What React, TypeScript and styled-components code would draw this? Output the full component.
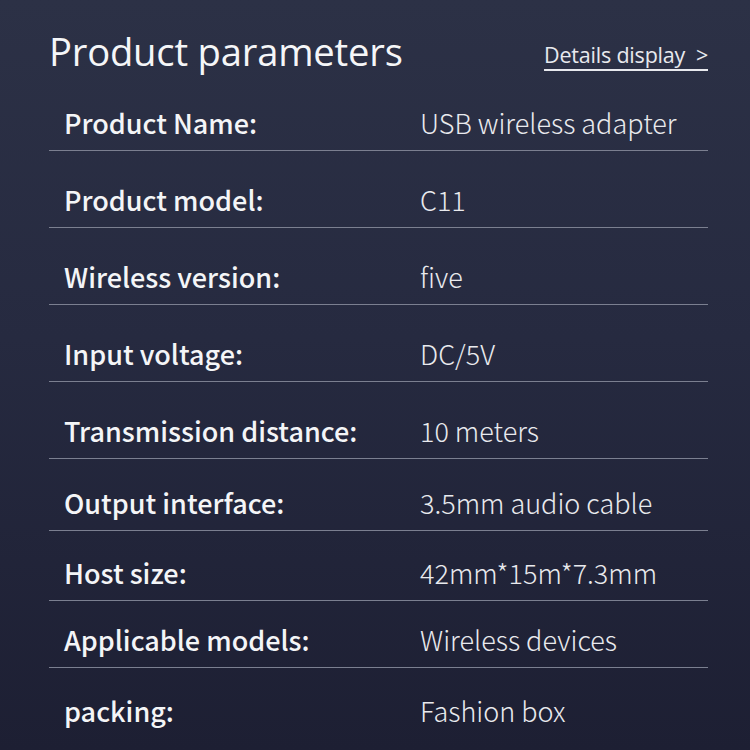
import React from "react";
import styled, { createGlobalStyle } from "styled-components";

const GlobalStyle = createGlobalStyle`
  html, body {
    margin: 0;
    padding: 0;
  }
  body {
    background: #1e2034;
  }
`;

const Page = styled.div`
  width: 750px;
  height: 750px;
  box-sizing: border-box;
  padding: 25px 42px 0 49px;
  background: linear-gradient(180deg, #2c3146 0%, #262a40 45%, #1d1f33 100%);
  font-family: "Noto Sans CJK SC", "Noto Sans", sans-serif;
  color: #f3f4f6;
  overflow: hidden;
`;

const Header = styled.div`
  display: flex;
  align-items: center;
  justify-content: space-between;
  height: 52px;
`;

const Title = styled.h1`
  margin: 0;
  font-family: "Open Sans", "Noto Sans", sans-serif;
  font-size: 38.2px;
  font-weight: 500;
  letter-spacing: -0.2px;
  color: #f5f6f8;
`;

const DetailsLink = styled.a`
  font-family: "Open Sans", "Noto Sans", sans-serif;
  font-size: 21.5px;
  letter-spacing: -0.2px;
  color: #e8e9ee;
  text-decoration: underline;
  text-decoration-skip-ink: none;
  text-underline-offset: 6px;
  text-decoration-thickness: 1.5px;
  white-space: pre;
  margin-top: 6px;
`;

const Table = styled.div`
  display: flex;
  flex-direction: column;
`;

const Row = styled.div<{ $h: number; $last?: boolean }>`
  display: flex;
  align-items: flex-end;
  height: ${(p) => p.$h}px;
  box-sizing: border-box;
  padding-bottom: ${(p) => (p.$last ? 14 : 12)}px;
  border-bottom: ${(p) => (p.$last ? "none" : "1.5px solid #7b7f90")};
`;

const Label = styled.div`
  width: 356px;
  padding-left: 15px;
  font-size: 27px;
  line-height: 30px;
  font-weight: 500;
  color: #f4f5f7;
`;

const Value = styled.div`
  font-size: 27px;
  line-height: 30px;
  font-weight: 300;
  color: #e9eaee;
`;

const rows: [string, string, number][] = [
  ["Product Name:", "USB wireless adapter", 74],
  ["Product model:", "C11", 77],
  ["Wireless version:", "five", 77],
  ["Input voltage:", "DC/5V", 77],
  ["Transmission distance:", "10 meters", 77],
  ["Output interface:", "3.5mm audio cable", 72],
  ["Host size:", "42mm*15m*7.3mm", 70],
  ["Applicable models:", "Wireless devices", 67],
  ["packing:", "Fashion box", 72],
];

export default function App() {
  return (
    <>
      <GlobalStyle />
      <Page>
        <Header>
          <Title>Product parameters</Title>
          <DetailsLink>{"Details display  >"}</DetailsLink>
        </Header>
        <Table>
          {rows.map(([label, value, h], i) => (
            <Row key={label} $h={h} $last={i === rows.length - 1}>
              <Label>{label}</Label>
              <Value>{value}</Value>
            </Row>
          ))}
        </Table>
      </Page>
    </>
  );
}
